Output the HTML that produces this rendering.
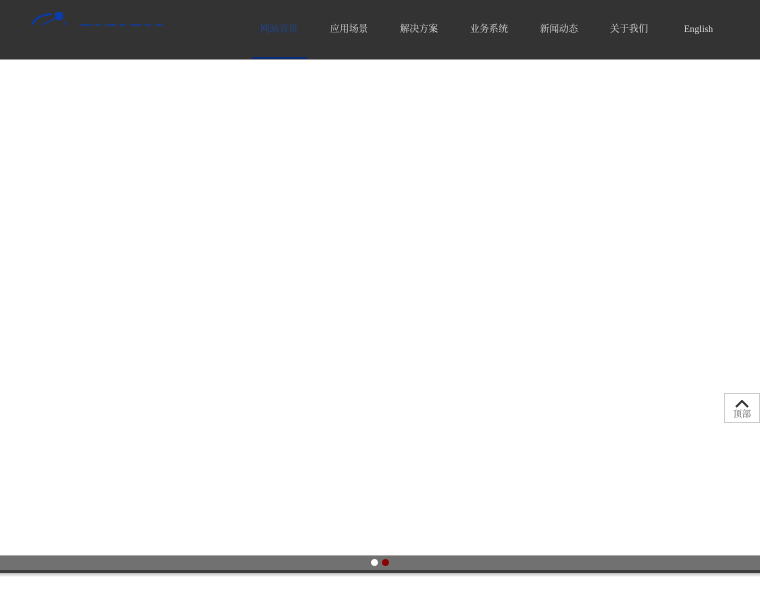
<!DOCTYPE html>
<html><head><meta charset="utf-8"><style>
*{margin:0;padding:0;box-sizing:border-box}
body{width:760px;height:600px;background:#fff;position:relative;overflow:hidden;font-family:"Liberation Serif","Noto Serif CJK SC",serif}
.hd{position:absolute;left:0;top:0;width:760px;height:59px;background:#333}
.hd2{position:absolute;left:0;top:59px;width:760px;height:1px;background:#999}
.nav{position:absolute;top:24px;font-size:9.5px;color:#ddd;line-height:12px;white-space:nowrap}
.act{color:#1a4aa0}
.ul{position:absolute;left:252px;top:57px;width:55px;height:2px;background:#0c2a7a}
.bar{position:absolute;left:0;top:555px;width:760px;height:15px;background:#717171;border-top:1px solid #aaa}
.bar2{position:absolute;left:0;top:570px;width:760px;height:3px;background:#3e3e3e}
.bar3{position:absolute;left:0;top:573px;width:760px;height:4px;background:linear-gradient(#bbb,#fff)}
.dot{position:absolute;top:559px;width:7px;height:7px;border-radius:50%}
.top{position:absolute;left:724px;top:393px;width:36px;height:30px;border:1px solid #ccc;background:#fff;text-align:center;font-size:9px;color:#555}
</style></head><body>
<div class="hd"></div><div class="hd2"></div>
<svg style="position:absolute;left:28px;top:10px" width="140" height="20" viewBox="0 0 140 20">
<path d="M4 15 Q8 5 24 4" stroke="#0b3ca8" stroke-width="2" fill="none"/>
<path d="M14 15 L28 8" stroke="#0b3ca8" stroke-width="1.2" fill="none"/>
<circle cx="31" cy="6" r="4.5" fill="#0b3ca8"/>
<path d="M36 12 L38 15" stroke="#0b3ca8" stroke-width="1.2"/>
<path d="M52 15 H135" stroke="#0b3ca8" stroke-width="1.3" stroke-dasharray="12 3 6 4"/>
</svg>
<div class="nav act" style="left:260px">网站首页</div>
<div class="nav" style="left:330px">应用场景</div>
<div class="nav" style="left:400px">解决方案</div>
<div class="nav" style="left:470px">业务系统</div>
<div class="nav" style="left:540px">新闻动态</div>
<div class="nav" style="left:610px">关于我们</div>
<div class="nav" style="left:684px">English</div>
<div class="ul"></div>
<div class="bar"></div><div class="bar2"></div><div class="bar3"></div>
<div class="dot" style="left:371px;background:#fff"></div>
<div class="dot" style="left:382px;background:#8b0000"></div>
<div class="top"><svg width="14" height="8" viewBox="0 0 14 8" style="display:block;margin:6px auto 0"><path d="M1 7 L7 1 L13 7" stroke="#333" stroke-width="2" fill="none"/></svg><div style="line-height:12px">顶部</div></div>
</body></html>
